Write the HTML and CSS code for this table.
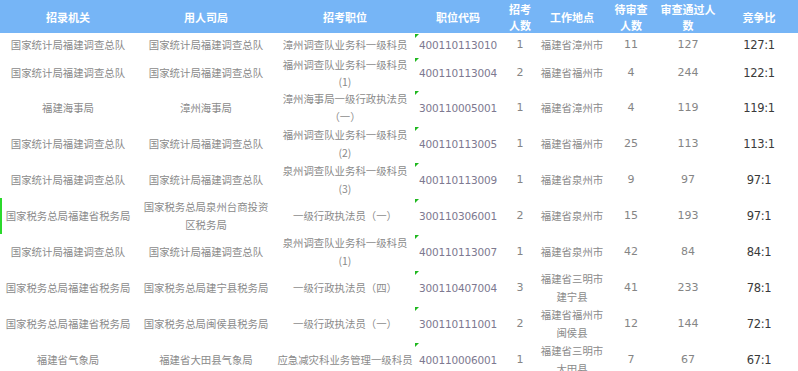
FILE: index.html
```html
<!DOCTYPE HTML>
<html>
<head>
	<meta charset="utf-8">
	<title>职位报名统计</title>
	<link rel="stylesheet" href="styles.css">
</head>
<body>
	<table class="stats">
		<colgroup>
			<col class="w-org">
			<col class="w-dept">
			<col class="w-post">
			<col class="w-code">
			<col class="w-num">
			<col class="w-place">
			<col class="w-wait">
			<col class="w-pass">
			<col class="w-ratio">
		</colgroup>
		<thead>
			<tr>
				<th>招录机关</th>
				<th>用人司局</th>
				<th>招考职位</th>
				<th>职位代码</th>
				<th>招考<br>人数</th>
				<th>工作地点</th>
				<th>待审查<br>人数</th>
				<th>审查通过人<br>数</th>
				<th>竞争比</th>
			</tr>
		</thead>
		<tbody>
			<tr class="row-short">
				<td>国家统计局福建调查总队</td>
				<td>国家统计局福建调查总队</td>
				<td>漳州调查队业务科一级科员</td>
				<td class="code">400110113010</td>
				<td>1</td>
				<td>福建省漳州市</td>
				<td>11</td>
				<td>127</td>
				<td class="ratio">127:1</td>
			</tr>
			<tr class="row-mid">
				<td>国家统计局福建调查总队</td>
				<td>国家统计局福建调查总队</td>
				<td>福州调查队业务科一级科员<br>(1)</td>
				<td class="code">400110113004</td>
				<td>2</td>
				<td>福建省福州市</td>
				<td>4</td>
				<td>244</td>
				<td class="ratio">122:1</td>
			</tr>
			<tr>
				<td>福建海事局</td>
				<td>漳州海事局</td>
				<td>漳州海事局一级行政执法员<br>（一）</td>
				<td class="code">300110005001</td>
				<td>1</td>
				<td>福建省漳州市</td>
				<td>4</td>
				<td>119</td>
				<td class="ratio">119:1</td>
			</tr>
			<tr>
				<td>国家统计局福建调查总队</td>
				<td>国家统计局福建调查总队</td>
				<td>福州调查队业务科一级科员<br>(2)</td>
				<td class="code">400110113005</td>
				<td>1</td>
				<td>福建省福州市</td>
				<td>25</td>
				<td>113</td>
				<td class="ratio">113:1</td>
			</tr>
			<tr>
				<td>国家统计局福建调查总队</td>
				<td>国家统计局福建调查总队</td>
				<td>泉州调查队业务科一级科员<br>(3)</td>
				<td class="code">400110113009</td>
				<td>1</td>
				<td>福建省泉州市</td>
				<td>9</td>
				<td>97</td>
				<td class="ratio">97:1</td>
			</tr>
			<tr class="row-active">
				<td>国家税务总局福建省税务局</td>
				<td>国家税务总局泉州台商投资<br>区税务局</td>
				<td>一级行政执法员（一）</td>
				<td class="code">300110306001</td>
				<td>2</td>
				<td>福建省泉州市</td>
				<td>15</td>
				<td>193</td>
				<td class="ratio">97:1</td>
			</tr>
			<tr>
				<td>国家统计局福建调查总队</td>
				<td>国家统计局福建调查总队</td>
				<td>泉州调查队业务科一级科员<br>(1)</td>
				<td class="code">400110113007</td>
				<td>1</td>
				<td>福建省泉州市</td>
				<td>42</td>
				<td>84</td>
				<td class="ratio">84:1</td>
			</tr>
			<tr>
				<td>国家税务总局福建省税务局</td>
				<td>国家税务总局建宁县税务局</td>
				<td>一级行政执法员（四）</td>
				<td class="code">300110407004</td>
				<td>3</td>
				<td>福建省三明市<br>建宁县</td>
				<td>41</td>
				<td>233</td>
				<td class="ratio">78:1</td>
			</tr>
			<tr>
				<td>国家税务总局福建省税务局</td>
				<td>国家税务总局闽侯县税务局</td>
				<td>一级行政执法员（一）</td>
				<td class="code">300110111001</td>
				<td>2</td>
				<td>福建省福州市<br>闽侯县</td>
				<td>12</td>
				<td>144</td>
				<td class="ratio">72:1</td>
			</tr>
			<tr>
				<td>福建省气象局</td>
				<td>福建省大田县气象局</td>
				<td>应急减灾科业务管理一级科员</td>
				<td class="code">400110006001</td>
				<td>1</td>
				<td>福建省三明市<br>大田县</td>
				<td>7</td>
				<td>67</td>
				<td class="ratio">67:1</td>
			</tr>
		</tbody>
	</table>
</body>
</html>
```

FILE: styles.css
```css
body {
	margin: 0;
	background: #FFF;
	font-family: "Noto Sans CJK SC", "Microsoft YaHei", sans-serif;
}

.stats {
	width: 798px;
	table-layout: fixed;
	border-collapse: collapse;
}

.w-org { width: 136px; }
.w-dept { width: 140px; }
.w-post { width: 138px; }
.w-code { width: 88px; }
.w-num { width: 36px; }
.w-place { width: 68px; }
.w-wait { width: 50px; }
.w-pass { width: 64px; }
.w-ratio { width: 78px; }

.stats th {
	height: 33px;
	padding: 0;
	background: #76B5F6;
	color: #FFF;
	font-size: 11px;
	font-weight: bold;
	line-height: 16px;
	text-align: center;
	white-space: nowrap;
}

.stats td {
	height: 36px;
	padding: 0;
	color: #8A8A8A;
	font-size: 10.4px;
	line-height: 18px;
	text-align: center;
	vertical-align: middle;
	white-space: nowrap;
}

.stats .row-short td { height: 24px; }
.stats .row-mid td {
	height: 33px;
	line-height: 16.5px;
}

.row-active td:first-child {
	box-shadow: inset 2px 0 0 #2BD92B;
}

.stats td.code {
	position: relative;
	color: #7D7990;
	font-family: "DejaVu Sans", sans-serif;
	font-size: 10.5px;
	letter-spacing: -0.2px;
}

.stats td.code::before {
	content: "";
	position: absolute;
	top: 1px;
	left: 1px;
	border-top: 4px solid #1FB81F;
	border-right: 4px solid transparent;
}

.stats td:nth-child(5),
.stats td:nth-child(7),
.stats td:nth-child(8) {
	font-family: "DejaVu Sans", sans-serif;
	font-size: 11px;
	color: #858585;
}

.stats td.ratio {
	color: #3A3A3A;
	font-family: "DejaVu Sans", sans-serif;
	font-size: 11.5px;
	letter-spacing: -0.3px;
}
```
